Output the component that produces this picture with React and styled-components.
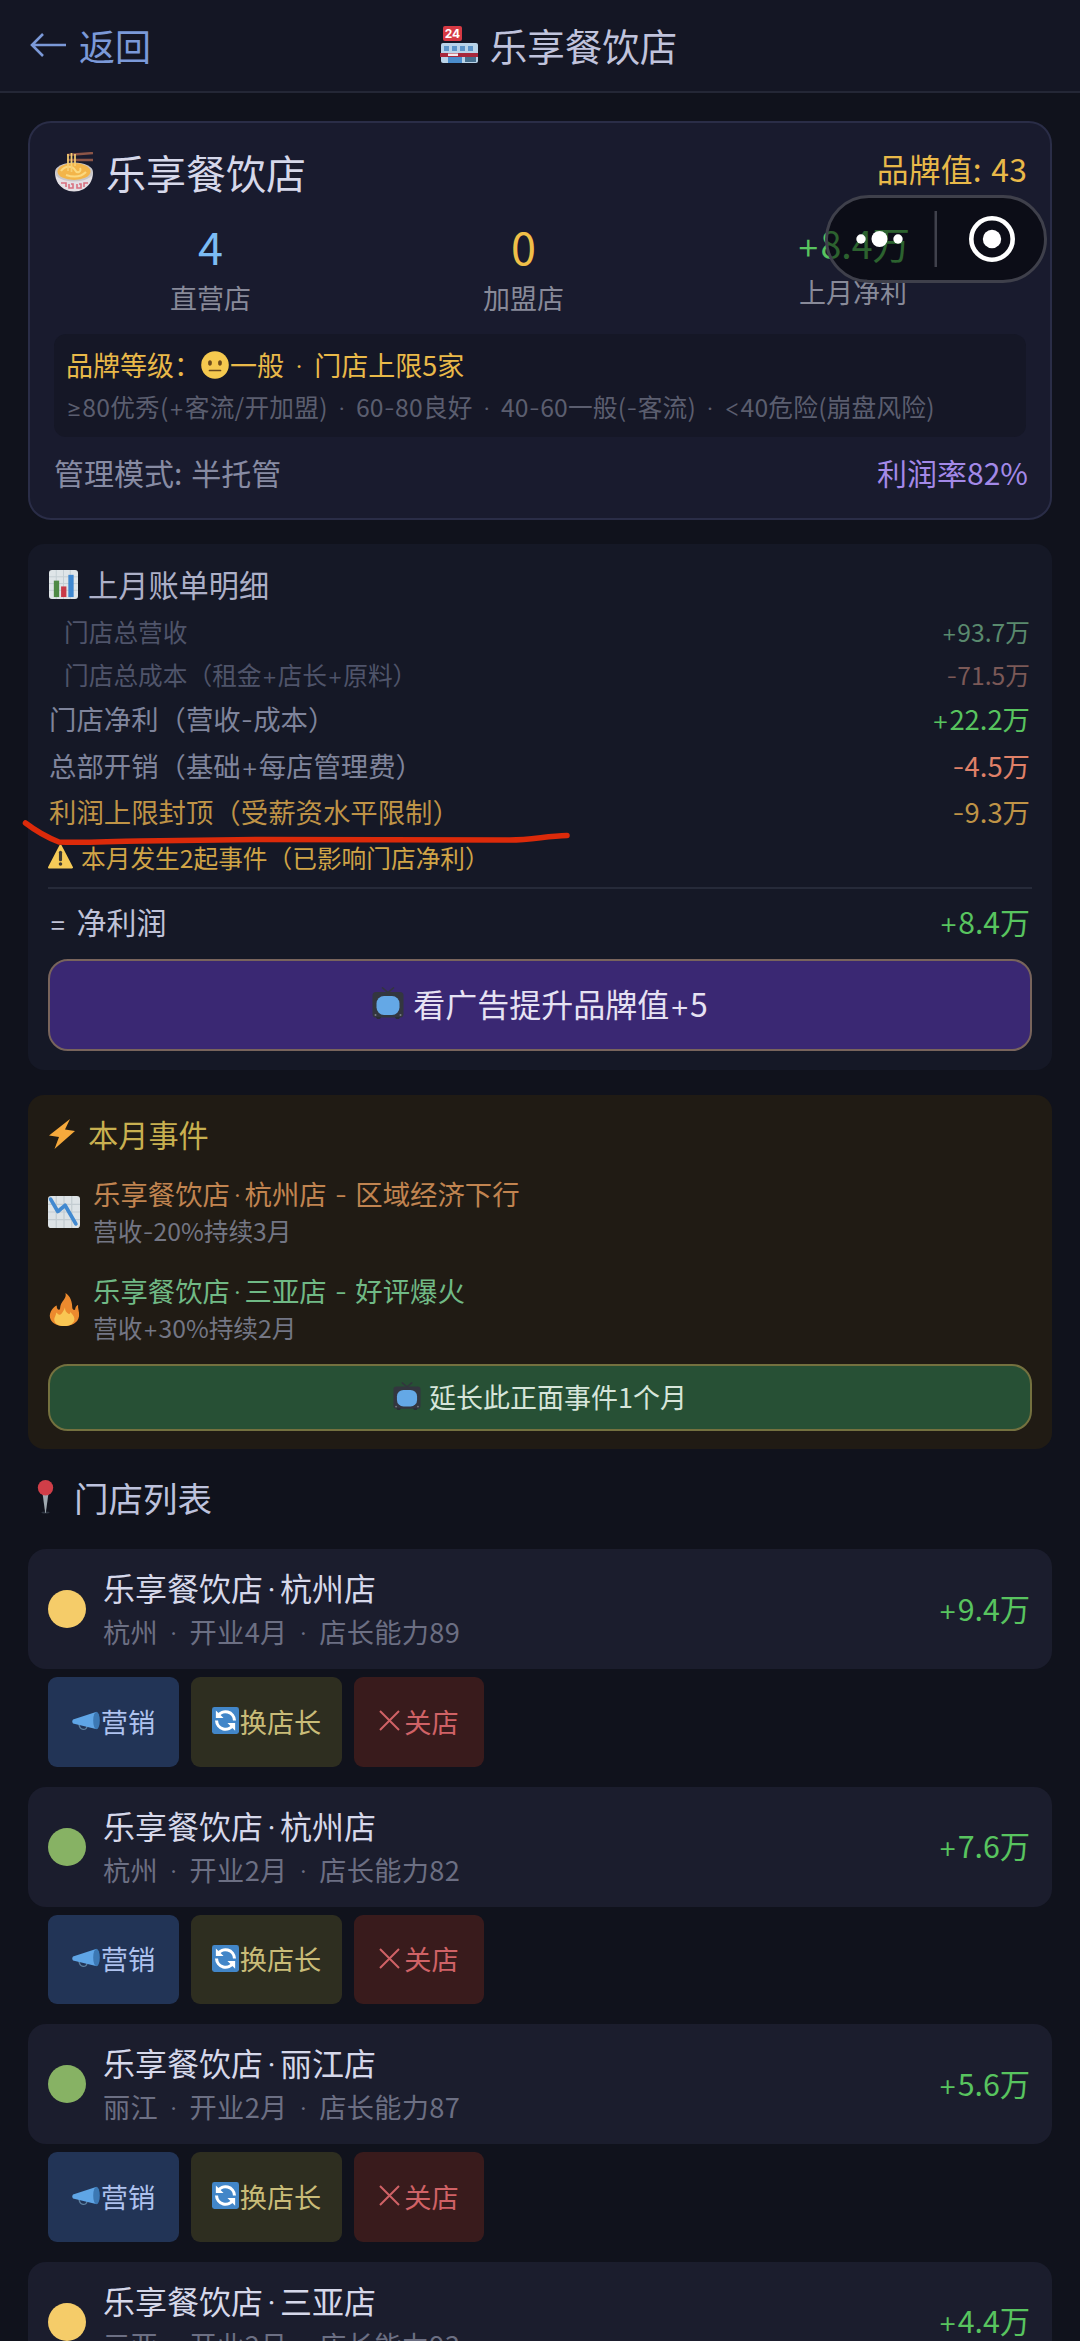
import React from 'react';
import styled, { createGlobalStyle, css } from 'styled-components';

const colors = {
  page: '#10121c',
  green: '#58c45f',
  greenDim: '#5a8a6e',
  red: '#df8068',
  redDim: '#7b5957',
  amber: '#bf9346',
  gold: '#e9b949',
  muted: '#7f849b',
  dim: '#4f546a',
};

const GlobalStyle = createGlobalStyle`
  * {
    box-sizing: border-box;
    word-spacing: 0.07em;
  }
  body {
    margin: 0;
    background: ${colors.page};
    font-family: 'Noto Sans CJK SC', 'Noto Sans', sans-serif;
    font-weight: 400;
    color: #d6d8ea;
  }
`;

/* ---------- icons ---------- */

const StoreIcon = () => (
  <svg viewBox="0 0 38 38">
    <rect x="3" y="0" width="19" height="15" rx="2" fill="#d63a44" />
    <text x="12.500" y="12" textAnchor="middle" fontFamily="Inter, sans-serif" fontSize="12" fontWeight="700" fill="#fff">24</text>
    <rect x="1" y="17" width="37" height="20" rx="2" fill="#b9d3e8" />
    <path d="M4 20h5v5H4zM12 20h5v5h-5zM20 20h5v5h-5zM28 20h5v5h-5z" fill="#5d94c8" />
    <rect x="0" y="27" width="38" height="4" fill="#a8283c" />
    <rect x="8" y="27.500" width="10" height="2.500" fill="#f3e9ee" />
    <rect x="8" y="31" width="14" height="6" fill="#4a8ccc" />
    <rect x="25" y="31" width="11" height="5" fill="#47708f" />
  </svg>
);

const BowlIcon = () => (
  <svg viewBox="0 0 40 40">
    <path d="M13 3l26-2M13 8h26" stroke="#8c5547" strokeWidth="2.400" />
    <path d="M1 20c0 10 5 14 9 17q10 5 20 0c4-3 9-7 9-17z" fill="#e3dfe4" />
    <ellipse cx="20" cy="20" rx="19" ry="9.500" fill="#c9c6c8" />
    <ellipse cx="20" cy="19.500" rx="16.500" ry="8.500" fill="#f3b54a" />
    <path d="M7 19c4-6 12-5 14-1s7 2 5-2M12 23c6 2 14 3 20-3" stroke="#fbd980" strokeWidth="2" fill="none" />
    <path d="M14 2v17M17.500 1v19M21 2v12" stroke="#f7cf73" strokeWidth="1.700" />
    <path d="M7 31h5v4M15 32v4h4v-4h-2M23 32v4h4v-4h-2M30 35v-4h4" stroke="#d9707f" strokeWidth="1.600" fill="none" />
  </svg>
);

const FaceIcon = () => (
  <svg viewBox="0 0 28 28">
    <circle cx="14" cy="14" r="13.800" fill="#f5c94f" />
    <ellipse cx="9" cy="12" rx="1.900" ry="2.800" fill="#6b4a1c" />
    <ellipse cx="19" cy="12" rx="1.900" ry="2.800" fill="#6b4a1c" />
    <path d="M8.500 19.500h11" stroke="#6b4a1c" strokeWidth="1.700" strokeLinecap="round" />
  </svg>
);

const BarChartIcon = () => (
  <svg viewBox="0 0 30 30">
    <rect width="30" height="30" rx="3" fill="#dfe5e8" />
    <path d="M0 7h30M0 14h30M0 21h30M7.500 0v30M15 0v30M22 0v30" stroke="#c4ced3" strokeWidth="1" />
    <rect x="5" y="11" width="5.500" height="17" fill="#4e8a45" />
    <rect x="12.500" y="17" width="5.500" height="11" fill="#c83a48" />
    <rect x="20" y="5" width="5.500" height="23" fill="#3f88d0" />
  </svg>
);

const WarningIcon = () => (
  <svg viewBox="0 0 24 24">
    <path d="M12 1.500L23 22.500H1z" fill="#f6cb58" stroke="#f6cb58" strokeWidth="2" strokeLinejoin="round" />
    <path d="M12 8v7" stroke="#3d3a34" strokeWidth="3" strokeLinecap="round" />
    <circle cx="12" cy="19.200" r="1.700" fill="#3d3a34" />
  </svg>
);

const TvIcon = () => (
  <svg viewBox="0 0 32 32">
    <path d="M10 0.500l6 5 6-5" stroke="#33353f" strokeWidth="1.600" fill="none" />
    <rect x="0.500" y="5" width="31" height="25.500" rx="3.500" fill="#33363f" />
    <path d="M4 30h5l-1 2H5zM23 30h5l-1 2h-3z" fill="#2b2d36" />
    <rect x="4.500" y="9" width="23" height="19" rx="7.500" fill="#64a8e6" />
    <circle cx="3.500" cy="28" r="1" fill="#7a7d85" />
    <circle cx="28.500" cy="28" r="1" fill="#7a7d85" />
  </svg>
);

const BoltIcon = () => (
  <svg viewBox="0 0 26 30">
    <path d="M21 0L0 16.500l10 1.500L5.500 30 26 12l-10-1.500z" fill="#f5a93c" />
  </svg>
);

const ChartDownIcon = () => (
  <svg viewBox="0 0 31 31">
    <rect width="31" height="31" rx="3" fill="#dde3e6" />
    <path d="M0 8h31M0 15.500h31M0 23h31M8 0v31M15.500 0v31M23 0v31" stroke="#c3ccd1" strokeWidth="1.200" />
    <path d="M2.500 3l7 12 7-6 10.500 18" stroke="#4189d0" strokeWidth="3.600" fill="none" strokeLinecap="round" strokeLinejoin="round" />
  </svg>
);

const FireIcon = () => (
  <svg viewBox="0 0 31 34">
    <path d="M17 0c1 4-1 6-3.500 9.500C11 13 12 16 11 17c-2 1-3-1-3-4-3 1-8 7-7 12 1 6 7 9 14.500 9S30 31 31 24c.5-5-1.500-8-1-12-2 1-3 3-3 5-1 1-3 0-3-2 0-6-2-12-7-15z" fill="#ec8a2e" />
    <path d="M16.500 15c0 3 1 5 3.500 6.500 1 .5 2-.5 2-2 3 3 5 6 4 9-1.500 3.500-5 5.500-10 5.500-6 0-10-2-10.500-6-.5-3 2-5 2-8 1 1 2.500 2.500 4 2.500 2-1 3.500-4 5-7.500z" fill="#f9c653" />
  </svg>
);

const PinIcon = () => (
  <svg viewBox="0 0 17 34">
    <ellipse cx="8.500" cy="32.500" rx="4" ry="1" fill="#2d3440" />
    <path d="M5.500 13h6L8.800 33h-.600z" fill="#9fa9b0" />
    <circle cx="8.500" cy="7.700" r="7.700" fill="#d03e48" />
  </svg>
);

const MegaphoneIcon = () => (
  <svg viewBox="0 0 28 20">
    <path d="M7 12c0 8 8 8 8 3" stroke="#5d7f9e" strokeWidth="1.300" fill="none" />
    <path d="M1 8.500L24 1v17L1 12.500q-1.500-2 0-4z" fill="#5fa5e6" />
    <ellipse cx="24.500" cy="9.500" rx="3.300" ry="8.800" fill="#3c78b4" />
  </svg>
);

const RefreshIcon = () => (
  <svg viewBox="0 0 28 28">
    <rect width="28" height="28" rx="2.500" fill="#4286c8" />
    <path d="M6 9.500A9.300 9.300 0 0 1 23.300 14M22 18.500A9.300 9.300 0 0 1 4.700 14" stroke="#fff" strokeWidth="3.200" fill="none" />
    <path d="M4 3.500v8h8zM24 24.500v-8h-8z" fill="#fff" />
  </svg>
);

/* ---------- shared parts ---------- */

const Icon = styled.span`
  display: inline-flex;
  flex: none;
  width: ${({ $w }) => $w}px;
  height: ${({ $h, $w }) => $h || $w}px;
  margin-right: ${({ $gap }) => $gap || 0}px;
  svg {
    width: 100%;
    height: 100%;
  }
`;

/* the CJK font sets these marks too wide or too narrow */
const Mark = styled.span`
  font-family: 'Inter', sans-serif;
  font-weight: 300;
  line-height: 1;
  ${({ $dot }) => $dot && 'margin: 0 0.125em;'}
`;

const Label = ({ children }) => (
  <span>
    {children
      .split(/([·\-+=≥<])/)
      .map((part, i) => (i % 2 ? <Mark key={i} $dot={part === '·'}>{part}</Mark> : part))}
  </span>
);

const SpreadRow = styled.div`
  display: flex;
  justify-content: space-between;
`;

const Amount = styled.span`
  color: ${({ $color }) => $color || colors.green};
`;

/* ---------- header ---------- */

const Screen = styled.div`
  width: 1080px;
  height: 2341px;
  overflow: hidden;
  background: ${colors.page};
  white-space: nowrap;
`;

const Header = styled.header`
  display: grid;
  grid-template-columns: 1fr auto 1fr;
  align-items: center;
  height: 93px;
  padding: 0 30px 2px;
  background: #141624;
  border-bottom: 2px solid #242736;
  line-height: 50px;
`;

const BackLink = styled.a`
  display: flex;
  align-items: center;
  gap: 12px;
  font-size: 36px;
  color: #7b99d8;
  svg {
    width: 37px;
    height: 26px;
  }
`;

const HeaderTitle = styled.h1`
  display: flex;
  align-items: center;
  margin: 0 0 0 37px;
  font-size: 37.500px;
  font-weight: inherit;
  color: #c0c3dc;
`;

/* ---------- brand card ---------- */

const Content = styled.main`
  padding: 28px 28px 0;
`;

const BrandCard = styled.section`
  position: relative;
  height: 399px;
  padding: 26px 24px 0;
  border: 2px solid #2a2d47;
  border-radius: 23px;
  background: #191b2e;
`;

const BrandName = styled.h2`
  display: flex;
  align-items: center;
  margin: 0;
  font-size: 40px;
  font-weight: inherit;
  line-height: 46px;
`;

const BrandValue = styled.span`
  margin-right: -1px;
  font-size: 31.800px;
  line-height: 38px;
  letter-spacing: 0.2px;
  color: ${colors.gold};
`;

const Stats = styled.div`
  display: flex;
  justify-content: space-around;
  align-items: flex-start;
  height: 94px;
  margin: 24px 0 21px;
`;

const Stat = styled.div`
  text-align: center;
`;

const StatNumber = styled.div`
  font-size: ${({ $small }) => ($small ? 37.500 : 45)}px;
  line-height: ${({ $small }) => ($small ? 48 : 54)}px;
  color: ${({ $color }) => $color};
`;

const StatLabel = styled.div`
  margin-top: 9px;
  font-size: 27px;
  line-height: 32px;
  color: #888a99;
`;

const TierBox = styled.div`
  height: 103px;
  padding: 11px 12px 0;
  border-radius: 12px;
  background: #151726;
`;

const TierLine = styled.div`
  display: flex;
  align-items: center;
  font-size: 27px;
  line-height: 40px;
  color: ${colors.gold};
`;

const TierHint = styled.div`
  margin-top: 2px;
  font-size: 24.700px;
  line-height: 38px;
  letter-spacing: 0.2px;
  color: #5b5e6f;
`;

const ModeRow = styled(SpreadRow)`
  margin: 15px -2px 0 0;
  font-size: 30px;
  line-height: 40px;
  color: #878ba3;
`;

const Capsule = styled.div`
  position: absolute;
  top: 72px;
  right: 3px;
  width: 222px;
  height: 88px;
  border: 3px solid #3f404b;
  border-radius: 44px;
  background: rgba(0, 0, 0, 0.5);
  svg {
    display: block;
  }
`;

/* ---------- bill card ---------- */

const BillCard = styled.section`
  position: relative;
  height: 526px;
  margin-top: 24px;
  padding: 20px 20px 0;
  border-radius: 16px;
  background: #151826;
`;

const CardTitle = styled.h3`
  display: flex;
  align-items: center;
  margin: 0;
  padding-left: 1px;
  font-size: 30.200px;
  font-weight: inherit;
  line-height: 40px;
  color: ${({ $color }) => $color || '#adb0c8'};
`;

const BillRows = styled.div`
  margin: 6px 0 0 1px;
`;

const BillRow = styled(SpreadRow)`
  font-size: 27.400px;
  line-height: 46.500px;
  color: ${({ $color }) => $color || colors.muted};
  padding-right: 2px;
  ${({ $minor }) =>
    $minor &&
    css`
      padding-left: 15px;
      font-size: 24.700px;
      line-height: 42.500px;
      color: ${colors.dim};
    `}
`;

const BillNotice = styled.div`
  display: flex;
  align-items: center;
  font-size: 24.700px;
  line-height: 44px;
  color: #d0a446;
`;

const NetRow = styled(SpreadRow)`
  margin-top: 8px;
  padding: 12px 2px 0 0;
  border-top: 2px solid #262a39;
  font-size: 30px;
  line-height: 40px;
  color: #c0c3d8;
`;

const AdButton = styled.button`
  display: flex;
  align-items: center;
  justify-content: center;
  width: 100%;
  height: ${({ $event }) => ($event ? 67 : 92)}px;
  margin-top: 18px;
  padding: 0 0 3px;
  border: 2px solid ${({ $event }) => ($event ? '#74713f' : '#78645c')};
  border-radius: 20px;
  background: ${({ $event }) => ($event ? '#275035' : '#3a2873')};
  font: inherit;
  font-size: ${({ $event }) => ($event ? 27 : 32)}px;
  color: ${({ $event }) => ($event ? '#d6e5da' : '#e6e2f3')};
`;

const Marker = styled.svg`
  position: absolute;
  top: 270px;
  left: -8px;
  width: 560px;
  height: 40px;
`;

/* ---------- event card ---------- */

const EventCard = styled.section`
  height: 354px;
  margin-top: 25px;
  padding: 19px 20px 0;
  border-radius: 16px;
  background: #201b14;
`;

const EventItem = styled.div`
  display: flex;
  align-items: center;
  height: 74px;
  margin-top: ${({ $first }) => ($first ? 21 : 23)}px;
`;

const EventName = styled.div`
  font-size: 27.400px;
  line-height: 37px;
  color: ${({ $good }) => ($good ? '#70b985' : '#c18450')};
`;

const EventEffect = styled.div`
  font-size: 24.700px;
  line-height: 37px;
  color: #737684;
`;

/* ---------- store list ---------- */

const ListTitle = styled.h3`
  display: flex;
  align-items: center;
  margin: 23px 0 27px 9px;
  font-size: 34.500px;
  font-weight: inherit;
  line-height: 50px;
  color: #bdc2dd;
`;

const StoreBlock = styled.div`
  height: 237.500px;
`;

const StoreCard = styled.div`
  display: flex;
  align-items: center;
  height: 120px;
  padding: 0 22px 0 20px;
  border-radius: 18px;
  background: #1b1d2d;
`;

const StatusDot = styled.span`
  width: 38px;
  height: 38px;
  margin-right: 17px;
  border-radius: 50%;
  background: ${({ $good }) => ($good ? '#87b264' : '#f5cc69')};
`;

const StoreInfo = styled.div`
  flex: 1;
`;

const StoreName = styled.div`
  font-size: 32px;
  line-height: 44px;
`;

const StoreMeta = styled.div`
  font-size: 27.200px;
  line-height: 44px;
  letter-spacing: 0.35px;
  color: #6c6f83;
`;

const StoreProfit = styled.span`
  padding-bottom: 3px;
  font-size: 30.300px;
  color: ${colors.green};
`;

const Actions = styled.div`
  display: flex;
  gap: 12px;
  padding: 8px 20px 0;
`;

const actionTypes = {
  promote: css`
    width: 131px;
    background: #223456;
    color: #aec2ee;
  `,
  swap: css`
    width: 151px;
    background: #2e2e20;
    color: #c9bc78;
  `,
  close: css`
    width: 130px;
    background: #391b1c;
    color: #d06266;
  `,
};

const ActionButton = styled.button`
  display: flex;
  align-items: center;
  justify-content: center;
  height: 89.500px;
  padding: 0 0 2px;
  border: 0;
  border-radius: 9px;
  font: inherit;
  font-size: 27.200px;
  ${({ $type }) => actionTypes[$type]}
`;

const bill = [
  { label: '门店总营收', value: '+93.7万', valueColor: colors.greenDim, minor: true },
  { label: '门店总成本（租金+店长+原料）', value: '-71.5万', valueColor: colors.redDim, minor: true },
  { label: '门店净利（营收-成本）', value: '+22.2万', valueColor: colors.green },
  { label: '总部开销（基础+每店管理费）', value: '-4.5万', valueColor: colors.red },
  { label: '利润上限封顶（受薪资水平限制）', value: '-9.3万', valueColor: colors.amber, color: colors.amber },
];

const stores = [
  { name: '乐享餐饮店·杭州店', meta: '杭州 · 开业4月 · 店长能力89', profit: '+9.4万' },
  { name: '乐享餐饮店·杭州店', meta: '杭州 · 开业2月 · 店长能力82', profit: '+7.6万', good: true },
  { name: '乐享餐饮店·丽江店', meta: '丽江 · 开业2月 · 店长能力87', profit: '+5.6万', good: true },
  { name: '乐享餐饮店·三亚店', meta: '三亚 · 开业2月 · 店长能力93', profit: '+4.4万' },
];

const Store = ({ name, meta, profit, good }) => (
  <StoreBlock>
    <StoreCard>
      <StatusDot $good={good} />
      <StoreInfo>
        <StoreName><Label>{name}</Label></StoreName>
        <StoreMeta><Label>{meta}</Label></StoreMeta>
      </StoreInfo>
      <StoreProfit><Label>{profit}</Label></StoreProfit>
    </StoreCard>
    <Actions>
      <ActionButton $type="promote">
        <Icon $w={28} $h={20} $gap={1}><MegaphoneIcon /></Icon>营销
      </ActionButton>
      <ActionButton $type="swap">
        <Icon $w={27} $gap={1}><RefreshIcon /></Icon>换店长
      </ActionButton>
      <ActionButton $type="close">
        <Icon $w={21} $gap={4}>
          <svg viewBox="0 0 21 21">
            <path d="M1 1l19 19M20 1L1 20" stroke="currentColor" strokeWidth="2" />
          </svg>
        </Icon>
        关店
      </ActionButton>
    </Actions>
  </StoreBlock>
);

const App = () => (
  <Screen>
    <GlobalStyle />
    <Header>
      <BackLink>
        <svg viewBox="0 0 37 26">
          <path d="M13 2L2 13l11 11M2 13h34" stroke="currentColor" strokeWidth="2.600" fill="none" />
        </svg>
        返回
      </BackLink>
      <HeaderTitle>
        <Icon $w={38} $gap={12}><StoreIcon /></Icon>
        乐享餐饮店
      </HeaderTitle>
    </Header>
    <Content>
      <BrandCard>
        <SpreadRow>
          <BrandName>
            <Icon $w={40} $gap={12}><BowlIcon /></Icon>
            乐享餐饮店
          </BrandName>
          <BrandValue>品牌值: 43</BrandValue>
        </SpreadRow>
        <Stats>
          <Stat>
            <StatNumber $color="#7cbcf4">4</StatNumber>
            <StatLabel>直营店</StatLabel>
          </Stat>
          <Stat>
            <StatNumber $color="#efbf48">0</StatNumber>
            <StatLabel>加盟店</StatLabel>
          </Stat>
          <Stat>
            <StatNumber $small $color={colors.green}><Label>+8.4万</Label></StatNumber>
            <StatLabel>上月净利</StatLabel>
          </Stat>
        </Stats>
        <TierBox>
          <TierLine>
            品牌等级：<Icon $w={28} $gap={1}><FaceIcon /></Icon><Label>一般 · 门店上限5家</Label>
          </TierLine>
          <TierHint>
            <Label>≥80优秀(+客流/开加盟) · 60-80良好 · 40-60一般(-客流) · &lt;40危险(崩盘风险)</Label>
          </TierHint>
        </TierBox>
        <ModeRow>
          <span>管理模式: 半托管</span>
          <Amount $color="#a389e8">利润率82%</Amount>
        </ModeRow>
        <Capsule>
          <svg width="216" height="82" viewBox="0 0 216 82">
            <g fill="#fff">
              <circle cx="33" cy="41" r="4.700" />
              <circle cx="51.500" cy="41" r="8" />
              <circle cx="70" cy="41" r="4.700" />
              <circle cx="164" cy="41" r="9.200" />
            </g>
            <rect x="106.500" y="13" width="2.500" height="56" fill="#40414c" />
            <circle cx="164" cy="41" r="20.700" fill="none" stroke="#fff" strokeWidth="4.600" />
          </svg>
        </Capsule>
      </BrandCard>

      <BillCard>
        <CardTitle>
          <Icon $w={29} $gap={10}><BarChartIcon /></Icon>
          上月账单明细
        </CardTitle>
        <BillRows>
          {bill.map((row) => (
            <BillRow key={row.label} $minor={row.minor} $color={row.color}>
              <Label>{row.label}</Label>
              <Amount $color={row.valueColor}><Label>{row.value}</Label></Amount>
            </BillRow>
          ))}
        </BillRows>
        <BillNotice>
          <Icon $w={25} $gap={8}><WarningIcon /></Icon>
          本月发生2起事件（已影响门店净利）
        </BillNotice>
        <NetRow>
          <Label>= 净利润</Label>
          <Amount><Label>+8.4万</Label></Amount>
        </NetRow>
        <AdButton>
          <Icon $w={32} $gap={9}><TvIcon /></Icon>
          <Label>看广告提升品牌值+5</Label>
        </AdButton>
        <Marker viewBox="0 0 560 40">
          <path
            d="M5.500 9C16 17 26 23 39 28C70 29 90 27 120 27L240 25.500L490 26C512 26 526 22 547 21.500"
            stroke="#dc2a0a"
            strokeWidth="5.500"
            strokeLinecap="round"
            fill="none"
          />
        </Marker>
      </BillCard>

      <EventCard>
        <CardTitle $color="#c8b050">
          <Icon $w={26} $h={30} $gap={13}><BoltIcon /></Icon>
          本月事件
        </CardTitle>
        <EventItem $first>
          <Icon $w={32} $gap={13}><ChartDownIcon /></Icon>
          <div>
            <EventName><Label>乐享餐饮店·杭州店 - 区域经济下行</Label></EventName>
            <EventEffect><Label>营收-20%持续3月</Label></EventEffect>
          </div>
        </EventItem>
        <EventItem>
          <Icon $w={32} $h={33} $gap={13}><FireIcon /></Icon>
          <div>
            <EventName $good><Label>乐享餐饮店·三亚店 - 好评爆火</Label></EventName>
            <EventEffect><Label>营收+30%持续2月</Label></EventEffect>
          </div>
        </EventItem>
        <AdButton $event>
          <Icon $w={28} $gap={8}><TvIcon /></Icon>
          延长此正面事件1个月
        </AdButton>
      </EventCard>

      <ListTitle>
        <Icon $w={17} $h={34} $gap={20}><PinIcon /></Icon>
        门店列表
      </ListTitle>
      {stores.map((store, i) => (
        <Store key={i} {...store} />
      ))}
    </Content>
  </Screen>
);

export default App;
